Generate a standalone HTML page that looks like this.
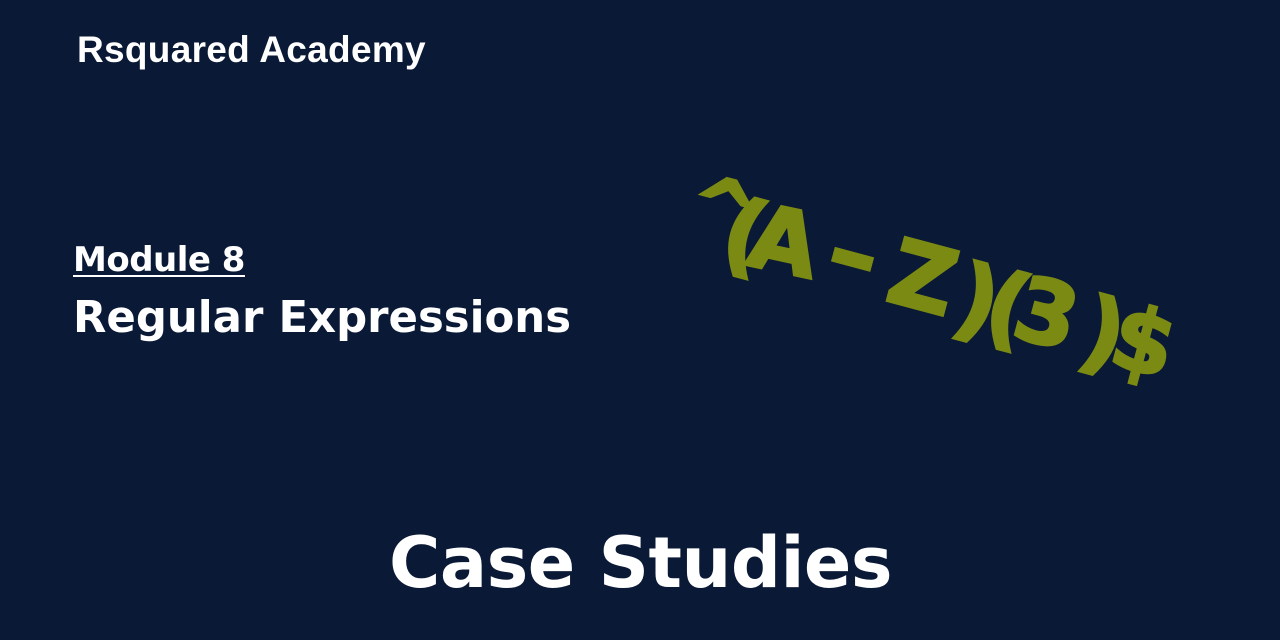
<!DOCTYPE html>
<html><head><meta charset="utf-8"><style>
html,body{margin:0;padding:0}
body{width:1280px;height:640px;background:#0a1935;position:relative;overflow:hidden;font-family:"DejaVu Sans","Liberation Sans",sans-serif;color:#fff}
.t{position:absolute;white-space:nowrap;font-weight:bold;line-height:1}
.g{position:absolute;color:#7b8a12;-webkit-text-stroke:3px #7b8a12;font-family:"DejaVu Sans",sans-serif;font-weight:bold;line-height:1;transform-origin:center;white-space:nowrap}
</style></head><body>
<div class="t" style="left:77px;top:31px;font-size:37px;font-family:'Liberation Sans',sans-serif;letter-spacing:0.3px">Rsquared Academy</div>
<div class="t" style="left:73px;top:243px;font-size:34px;text-decoration:underline;text-decoration-thickness:2px;text-underline-offset:4px;letter-spacing:-0.5px">Module 8</div>
<div class="t" style="left:73px;top:297px;font-size:43.4px">Regular Expressions</div>
<div class="t" style="left:389px;top:528px;font-size:70px;letter-spacing:-0.5px">Case Studies</div>

<div class="g" style="left:690px;top:170px;font-size:80px;transform:rotate(15deg)">^</div>
<div class="g" style="left:724px;top:190px;font-size:90px;transform:rotate(15deg)">(</div>
<div class="g" style="left:750px;top:198px;font-size:88px;transform:rotate(12deg)">A</div>
<div class="g" style="left:836px;top:213px;font-size:85px;transform:rotate(15deg) scaleX(1.4)">-</div>
<div class="g" style="left:890px;top:234px;font-size:90px;transform:rotate(15deg)">Z</div>
<div class="g" style="left:957px;top:256px;font-size:90px;transform:rotate(15deg)">)</div>
<div class="g" style="left:987px;top:263px;font-size:90px;transform:rotate(15deg)">(</div>
<div class="g" style="left:1016px;top:270px;font-size:88px;transform:rotate(15deg)">3</div>
<div class="g" style="left:1083px;top:289px;font-size:90px;transform:rotate(15deg)">)</div>
<div class="g" style="left:1113px;top:298px;font-size:88px;transform:rotate(15deg)">$</div>
</body></html>
